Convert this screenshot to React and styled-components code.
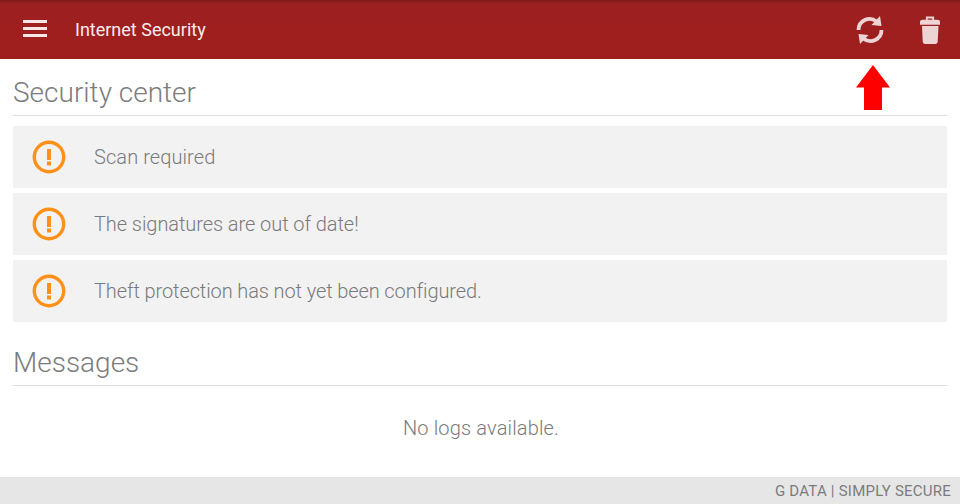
import styled, { createGlobalStyle } from 'styled-components';

const GlobalStyle = createGlobalStyle`
  html, body {
    margin: 0;
    padding: 0;
    background: #fff;
  }
  body {
    font-family: Roboto, "Liberation Sans", sans-serif;
  }
`;

const Page = styled.div`
  position: relative;
  display: flex;
  flex-direction: column;
  width: 960px;
  height: 504px;
  overflow: hidden;
`;

const Toolbar = styled.header`
  display: flex;
  align-items: center;
  height: 59px;
  flex: none;
  background: linear-gradient(#7f1a1a 0, #9e1f1f 4px, #9f1f1f 100%);
`;

const MenuButton = styled.div`
  display: flex;
  flex-direction: column;
  gap: 4px;
  width: 24px;
  margin-left: 23px;
  margin-top: -3px;
`;

const MenuLine = styled.span`
  display: block;
  height: 3px;
  background: #f6e6e6;
`;

const Title = styled.h1`
  margin: 0 0 0 28px;
  flex: 1;
  font-size: 18px;
  font-weight: 400;
  color: #f7ecec;
`;

const ToolIcon = styled.div`
  display: flex;
  color: #eed5d5;
  margin-right: ${(p) => p.$right}px;
`;

const Content = styled.main`
  flex: 1;
  padding: 0 13px;
`;

const SectionTitle = styled.h2`
  margin: 0;
  height: ${(p) => p.$height}px;
  box-sizing: border-box;
  padding-top: ${(p) => p.$top}px;
  border-bottom: 1px solid #dedede;
  font-size: 28px;
  line-height: 33px;
  font-weight: 300;
  color: #7c7c7c;
`;

const StatusList = styled.div`
  display: flex;
  flex-direction: column;
  gap: 5px;
  margin-top: 10px;
`;

const StatusRow = styled.div`
  display: flex;
  align-items: center;
  gap: 28px;
  height: 62px;
  padding-left: 19px;
  background: #f2f2f2;
  font-size: 20px;
  font-weight: 300;
  color: #7a7a7a;
  letter-spacing: ${(p) => p.$spacing}px;
`;

const EmptyText = styled.p`
  margin: 30px 0 0;
  padding-left: 2px;
  text-align: center;
  font-size: 20px;
  line-height: 24px;
  font-weight: 300;
  letter-spacing: 0.15px;
  color: #7a7a7a;
`;

const Footer = styled.footer`
  display: flex;
  align-items: center;
  justify-content: flex-end;
  flex: none;
  height: 27px;
  padding-right: 9px;
  background: #e6e6e6;
  font-size: 15px;
  letter-spacing: 0.23px;
  color: #7c7c7c;
`;

const ArrowMark = styled.svg`
  position: absolute;
  left: 856px;
  top: 65px;
`;

const WarningIcon = () => (
  <svg width="34" height="34" viewBox="0 0 34 34">
    <circle cx="17" cy="17" r="14.7" fill="none" stroke="#ff9018" strokeWidth="3.4" />
    <rect x="15" y="9" width="4" height="11" fill="#ff9018" />
    <rect x="15" y="21.500" width="4" height="4" fill="#ff9018" />
  </svg>
);

const SyncArrow = ({ flip }) => (
  <g transform={flip ? 'rotate(180 15 15)' : undefined}>
    <path d="M3.500 15A11 11 0 0 1 21.500 6.500" fill="none" stroke="currentColor" strokeWidth="3.800" />
    <path d="M25 1L26.500 11L16.500 10z" fill="currentColor" />
  </g>
);

const SyncIcon = () => (
  <svg width="30" height="30" viewBox="0 0 30 30">
    <SyncArrow />
    <SyncArrow flip />
  </svg>
);

const TrashIcon = () => (
  <svg width="20" height="28" viewBox="0 0 20 28" fill="currentColor">
    <path d="M6.800 4.500V1.500h6.400v3" fill="none" stroke="currentColor" strokeWidth="1.800" />
    <path d="M2.500 3.800h15c1.500 0 2.500.9 2.500 2.200v2.800H0V6c0-1.300 1-2.200 2.500-2.200z" />
    <path d="M2 10h16.500l-.8 15.500c-.1 1.500-1 2.500-2.500 2.500H5.200c-1.500 0-2.400-1-2.500-2.500z" />
  </svg>
);

const statuses = [
  { text: 'Scan required', spacing: 0.08 },
  { text: 'The signatures are out of date!', spacing: -0.07 },
  { text: 'Theft protection has not yet been configured.', spacing: -0.11 },
];

const App = () => (
  <Page>
    <GlobalStyle />
    <Toolbar>
      <MenuButton>
        <MenuLine />
        <MenuLine />
        <MenuLine />
      </MenuButton>
      <Title>Internet Security</Title>
      <ToolIcon $right={35}>
        <SyncIcon />
      </ToolIcon>
      <ToolIcon $right={20}>
        <TrashIcon />
      </ToolIcon>
    </Toolbar>
    <Content>
      <SectionTitle $height={57} $top={17}>Security center</SectionTitle>
      <StatusList>
        {statuses.map((s) => (
          <StatusRow key={s.text} $spacing={s.spacing}>
            <WarningIcon />
            <span>{s.text}</span>
          </StatusRow>
        ))}
      </StatusList>
      <SectionTitle $height={64} $top={24}>Messages</SectionTitle>
      <EmptyText>No logs available.</EmptyText>
    </Content>
    <Footer>G DATA | SIMPLY SECURE</Footer>
    <ArrowMark width="34" height="45" viewBox="0 0 34 45">
      <path d="M17 0L34 22.500H26V45H8V22.500H0z" fill="#ff0000" />
    </ArrowMark>
  </Page>
);

export default App;
